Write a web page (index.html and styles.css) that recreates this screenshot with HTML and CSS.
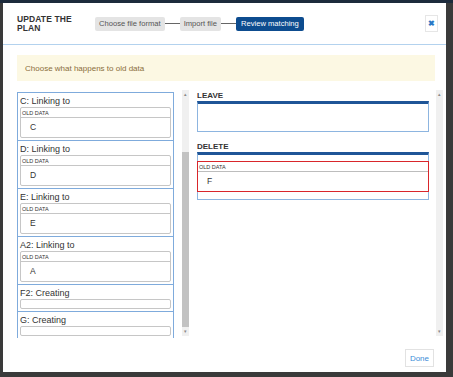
FILE: index.html
```html
<!DOCTYPE html>
<html lang="en">
<head>
    <meta charset="UTF-8">
    <meta name="viewport" content="width=device-width, initial-scale=1.0">
    <title>Update the plan</title>
    <link rel="stylesheet" href="styles.css">
</head>
<body>
    <div class="dialog">
        <div class="header">
            <div class="title">UPDATE THE<br>PLAN</div>
            <div class="steps">
                <span class="step">Choose file format</span>
                <span class="link"></span>
                <span class="step">Import file</span>
                <span class="link"></span>
                <span class="step active">Review matching</span>
            </div>
            <button class="close">&#x2716;</button>
        </div>
        <div class="content">
            <div class="alert">Choose what happens to old data</div>
            <div class="columns">
                <div class="left">
                    <div class="list">
                        <div class="item">
                            <div class="label">C: Linking to</div>
                            <div class="box">
                                <div class="cap">OLD DATA</div>
                                <div class="value">C</div>
                            </div>
                        </div>
                        <div class="item">
                            <div class="label">D: Linking to</div>
                            <div class="box">
                                <div class="cap">OLD DATA</div>
                                <div class="value">D</div>
                            </div>
                        </div>
                        <div class="item">
                            <div class="label">E: Linking to</div>
                            <div class="box">
                                <div class="cap">OLD DATA</div>
                                <div class="value">E</div>
                            </div>
                        </div>
                        <div class="item">
                            <div class="label">A2: Linking to</div>
                            <div class="box">
                                <div class="cap">OLD DATA</div>
                                <div class="value">A</div>
                            </div>
                        </div>
                        <div class="item">
                            <div class="label">F2: Creating</div>
                            <div class="box empty"></div>
                        </div>
                        <div class="item">
                            <div class="label">G: Creating</div>
                            <div class="box empty"></div>
                        </div>
                    </div>
                    <div class="scrollbar">
                        <span class="arrow">&#9652;</span>
                        <div class="thumb"></div>
                        <span class="arrow">&#9662;</span>
                    </div>
                </div>
                <div class="right">
                    <div class="groups">
                        <div class="group-title">LEAVE</div>
                        <div class="drop leave"></div>
                        <div class="group-title">DELETE</div>
                        <div class="drop">
                            <div class="box picked">
                                <div class="cap">OLD DATA</div>
                                <div class="value">F</div>
                            </div>
                        </div>
                    </div>
                    <div class="scrollbar plain">
                        <span class="arrow">&#9652;</span>
                        <span class="arrow">&#9662;</span>
                    </div>
                </div>
            </div>
            <div class="footer">
                <button class="done">Done</button>
            </div>
        </div>
    </div>
</body>
</html>
```

FILE: styles.css
```css
html {
    background: #3a3a3a;
}
body {
    margin: 0;
    border-top: 3px solid #1d2b3c;
    font-family: "Liberation Sans", Arial, sans-serif;
    color: #333;
}
.dialog {
    width: 443px;
    height: 369px;
    margin-left: 3px;
    background: #fff;
    display: flex;
    flex-direction: column;
}
.header {
    height: 41px;
    border-bottom: 1px solid #b3d2ee;
    display: flex;
    align-items: center;
    padding: 0 8px 0 14px;
}
.title {
    width: 78px;
    font-size: 8.5px;
    font-weight: bold;
    line-height: 9px;
    letter-spacing: 0.1px;
}
.steps {
    display: flex;
    align-items: center;
    flex: 1;
}
.step {
    background: #e4e4e4;
    color: #555;
    font-size: 7.6px;
    padding: 0 4px;
    height: 14px;
    line-height: 14px;
    border-radius: 2px;
}
.step.active {
    background: #0d4c8f;
    color: #fff;
    padding: 0 5px;
}
.link {
    width: 15px;
    border-top: 1px solid #666;
}
.close {
    width: 13px;
    height: 17px;
    padding: 0;
    border: 1px solid #e6e6e6;
    background: #fff;
    color: #2a78c5;
    font-size: 8px;
    font-weight: bold;
}
.content {
    flex: 1;
    padding: 10px 3px 5px 14px;
    display: flex;
    flex-direction: column;
}
.alert {
    background: #fcf8e3;
    color: #8a6d3b;
    font-size: 8px;
    height: 26px;
    line-height: 27px;
    padding-left: 8px;
    margin-right: 8px;
}
.columns {
    display: flex;
    margin-top: 9px;
    height: 248px;
    gap: 7px;
}
.left {
    width: 172px;
    display: flex;
    overflow: hidden;
}
.list {
    width: 157px;
    padding-top: 2px;
    margin-right: 8px;
}
.item {
    border: 1px solid #7fabdc;
    padding: 0 2px 2px;
    margin-bottom: -1px;
}
.label {
    font-size: 9px;
    height: 13px;
    line-height: 16px;
}
.box {
    border: 1.5px solid #c6c6c6;
    border-radius: 2px;
    margin-top: 1px;
    background: #fff;
}
.box.empty {
    height: 8px;
}
.cap {
    font-size: 5.5px;
    height: 9px;
    line-height: 11px;
    padding-left: 1px;
    border-bottom: 1px solid #c6c6c6;
}
.value {
    font-size: 8.5px;
    height: 19px;
    line-height: 18px;
    padding-left: 9px;
}
.scrollbar {
    width: 7px;
    background: #f0f0f0;
    display: flex;
    flex-direction: column;
    align-items: center;
    justify-content: space-between;
    height: 246px;
}
.arrow {
    font-size: 5px;
    color: #888;
    height: 9px;
    line-height: 9px;
}
.thumb {
    flex: 1;
    width: 7px;
    background: #c2c2c2;
    margin: 53px 0 0;
}
.right {
    flex: 1;
    display: flex;
    gap: 7px;
}
.groups {
    flex: 1;
    padding-left: 1px;
}
.group-title {
    font-size: 8px;
    font-weight: bold;
    height: 11px;
    line-height: 11px;
}
.drop {
    border: 1px solid #8db5e0;
    border-top: 3px solid #1f5597;
    margin-bottom: 9px;
    padding: 6px 0 7px;
}
.drop.leave {
    height: 27px;
    padding: 0;
}
.picked {
    border: 1.5px solid #d9262b;
    border-radius: 0;
    margin: 0 -1px;
}
.picked .cap {
    border-bottom-color: #bdbdbd;
}
.footer {
    display: flex;
    justify-content: flex-end;
    margin-top: auto;
    padding-right: 9px;
}
.done {
    height: 18px;
    padding: 0 4px;
    border: 1px solid #e2e2e2;
    background: #fff;
    color: #3c8dd8;
    font-family: "Liberation Sans", Arial, sans-serif;
    font-size: 8px;
}
```
